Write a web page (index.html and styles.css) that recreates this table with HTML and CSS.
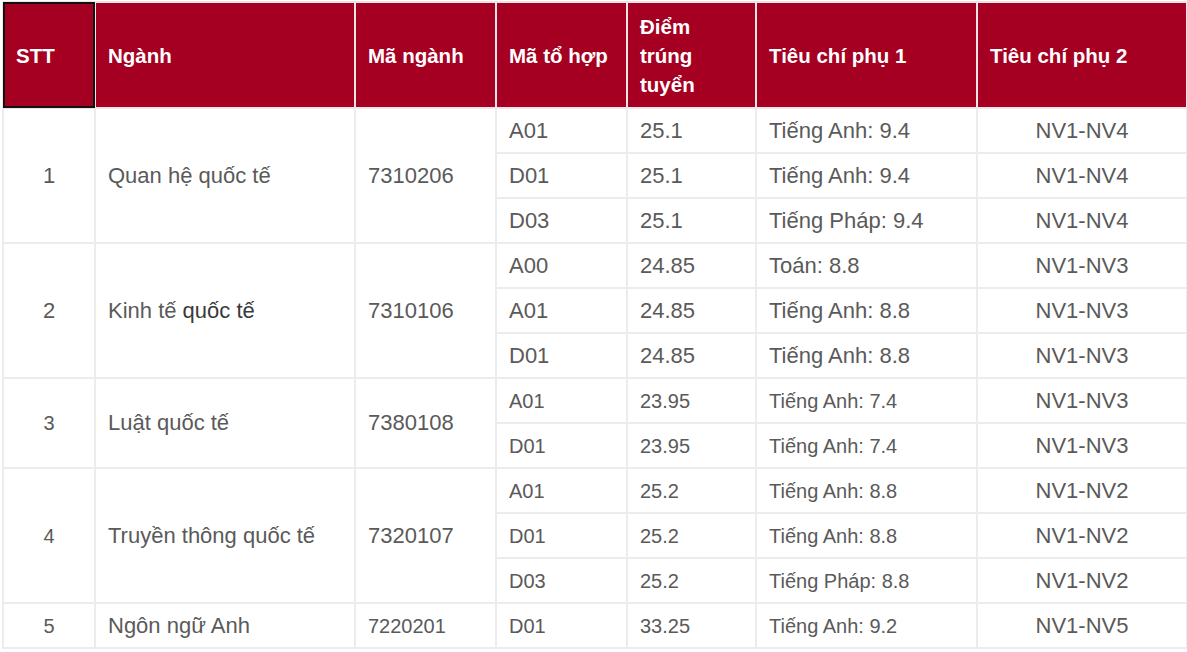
FILE: index.html
```html
<!DOCTYPE html>
<html lang="vi">
<head>
<meta charset="utf-8">
<title>Điểm trúng tuyển</title>
<link rel="stylesheet" href="styles.css">
</head>
<body>
<table class="score-table">
  <colgroup>
    <col class="c-stt"><col class="c-nganh"><col class="c-ma"><col class="c-tohop"><col class="c-diem"><col class="c-tc1"><col class="c-tc2">
  </colgroup>
  <thead>
    <tr>
      <th class="selected">STT</th>
      <th>Ngành</th>
      <th>Mã ngành</th>
      <th>Mã tổ hợp</th>
      <th>Điểm<br>trúng<br>tuyển</th>
      <th>Tiêu chí phụ 1</th>
      <th>Tiêu chí phụ 2</th>
    </tr>
  </thead>
  <tbody>
    <tr>
      <td class="center" rowspan="3">1</td>
      <td rowspan="3">Quan hệ quốc tế</td>
      <td rowspan="3">7310206</td>
      <td>A01</td><td>25.1</td><td>Tiếng Anh: 9.4</td><td class="center">NV1-NV4</td>
    </tr>
    <tr><td>D01</td><td>25.1</td><td>Tiếng Anh: 9.4</td><td class="center">NV1-NV4</td></tr>
    <tr><td>D03</td><td>25.1</td><td>Tiếng Pháp: 9.4</td><td class="center">NV1-NV4</td></tr>

    <tr>
      <td class="center" rowspan="3">2</td>
      <td rowspan="3">Kinh tế <span class="dark">quốc tế</span></td>
      <td rowspan="3">7310106</td>
      <td>A00</td><td>24.85</td><td>Toán: 8.8</td><td class="center">NV1-NV3</td>
    </tr>
    <tr><td>A01</td><td>24.85</td><td>Tiếng Anh: 8.8</td><td class="center">NV1-NV3</td></tr>
    <tr><td>D01</td><td>24.85</td><td>Tiếng Anh: 8.8</td><td class="center">NV1-NV3</td></tr>

    <tr>
      <td class="center sm" rowspan="2">3</td>
      <td rowspan="2">Luật quốc tế</td>
      <td rowspan="2">7380108</td>
      <td class="sm">A01</td><td class="sm">23.95</td><td class="sm">Tiếng Anh: 7.4</td><td class="center">NV1-NV3</td>
    </tr>
    <tr><td class="sm">D01</td><td class="sm">23.95</td><td class="sm">Tiếng Anh: 7.4</td><td class="center">NV1-NV3</td></tr>

    <tr>
      <td class="center sm" rowspan="3">4</td>
      <td rowspan="3">Truyền thông quốc tế</td>
      <td rowspan="3">7320107</td>
      <td class="sm">A01</td><td class="sm">25.2</td><td class="sm">Tiếng Anh: 8.8</td><td class="center">NV1-NV2</td>
    </tr>
    <tr><td class="sm">D01</td><td class="sm">25.2</td><td class="sm">Tiếng Anh: 8.8</td><td class="center">NV1-NV2</td></tr>
    <tr><td class="sm">D03</td><td class="sm">25.2</td><td class="sm">Tiếng Pháp: 8.8</td><td class="center">NV1-NV2</td></tr>

    <tr>
      <td class="center sm">5</td>
      <td>Ngôn ngữ Anh</td>
      <td class="sm">7220201</td>
      <td class="sm">D01</td><td class="sm">33.25</td><td class="sm">Tiếng Anh: 9.2</td><td class="center">NV1-NV5</td>
    </tr>
  </tbody>
</table>
</body>
</html>
```

FILE: styles.css
```css
html, body {
  margin: 0;
  padding: 0;
  background: #ffffff;
}

body {
  padding: 1px 0 0 2px;
  font-family: "Liberation Sans", Arial, sans-serif;
}

.score-table {
  border-collapse: collapse;
  table-layout: fixed;
  width: 1184px;
}

.c-stt { width: 92px; }
.c-nganh { width: 260px; }
.c-ma { width: 141px; }
.c-tohop { width: 131px; }
.c-diem { width: 129px; }
.c-tc1 { width: 221px; }
.c-tc2 { width: 210px; }

.score-table th {
  background: #a50021;
  color: #ffffff;
  font-weight: bold;
  font-size: 20.5px;
  line-height: 29px;
  text-align: left;
  vertical-align: middle;
  height: 104px;
  padding: 0 12px;
  border: 2px solid #f0e4e6;
}

.score-table th.selected {
  outline: 2px solid #111111;
  outline-offset: -2px;
}

.score-table td {
  color: #5a5a5a;
  font-size: 22px;
  line-height: 26px;
  height: 43px;
  padding: 0 12px;
  border: 2px solid #ececec;
  vertical-align: middle;
  text-align: left;
}

.score-table td.sm {
  font-size: 20px;
}

.score-table td.center {
  text-align: center;
}

.dark {
  color: #3a3a3a;
}
```
